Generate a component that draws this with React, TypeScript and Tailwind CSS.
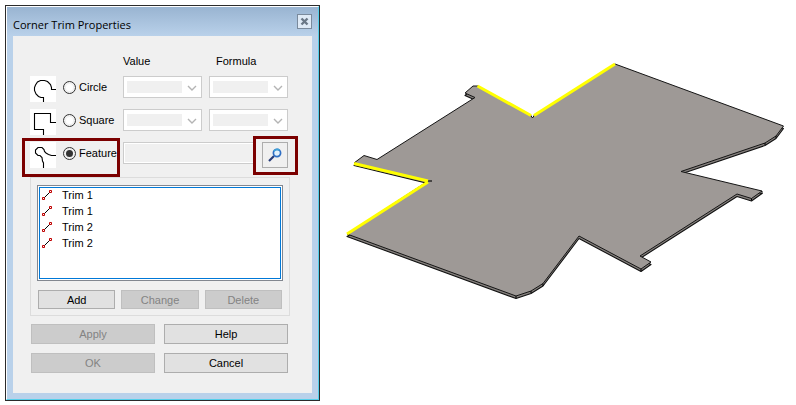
import { useState } from 'react';
import type { ReactNode } from 'react';

type Shape = 'circle' | 'square' | 'feature';

interface TrimItem {
  id: number;
  name: string;
}

const trims: TrimItem[] = [
  { id: 1, name: 'Trim 1' },
  { id: 2, name: 'Trim 1' },
  { id: 3, name: 'Trim 2' },
  { id: 4, name: 'Trim 2' },
];

const shapePaths: Record<Shape, string> = {
  circle: 'M26 13.5H21.5V11.5L20.5 8.5L17.5 5.5L14.5 4.5H10.5L7.5 6L5.5 9L4.5 11.5V14.5L6 18L8.5 20.5L11 21.5H13.5V26',
  square: 'M26 13.5H20.5V4.5H4.5V20.5H13.5V26',
  feature: 'M26 13.5H21.5L18.5 12.5L16 11L14.5 9.5L14 7.5L12 5.5H8L5.5 8V11L8 13.5H10L12 15.5L12.5 19L13.5 21V26',
};

function ShapeIcon({ shape }: { shape: Shape }) {
  return (
    <svg viewBox="0 0 26 26" className="h-[26px] w-[26px] shrink-0 bg-white" aria-hidden="true">
      <path d={shapePaths[shape]} fill="none" stroke="#000" strokeWidth="1.1" />
    </svg>
  );
}

function ShapeOption({ shape, label, checked, onSelect }: {
  shape: Shape;
  label: string;
  checked: boolean;
  onSelect: (shape: Shape) => void;
}) {
  return (
    <div className="relative flex items-start gap-[7px]">
      <ShapeIcon shape={shape} />
      <label className="flex h-[22px] items-center gap-[3px] whitespace-nowrap">
        <input
          type="radio"
          name="shape"
          value={shape}
          checked={checked}
          onChange={() => onSelect(shape)}
          className="h-[13px] w-[13px] shrink-0 appearance-none rounded-full border border-[#333] bg-white bg-clip-content p-[2px] checked:bg-[#333]"
        />
        {label}
      </label>
      {shape === 'feature' && (
        <div className="pointer-events-none absolute -top-1 -right-1 -bottom-[9px] -left-2 border-3 border-[#7b0000]" />
      )}
    </div>
  );
}

function Combo({ label }: { label: string }) {
  return (
    <div className="relative h-[22px] border border-[#ccc] bg-white">
      <select disabled aria-label={label} className="block h-full w-full appearance-none border-y-4 border-r-[19px] border-l-3 border-white bg-[#f0f0f0]" />
      <svg viewBox="0 0 10 6" className="pointer-events-none absolute top-2 right-1 h-[6px] w-[10px]" aria-hidden="true">
        <path d="M1 1L5 5L9 1" fill="none" stroke="#b4b4b4" strokeWidth="1.4" />
      </svg>
    </div>
  );
}

function DialogButton({ disabled, children }: { disabled?: boolean; children: ReactNode }) {
  return (
    <button
      type="button"
      disabled={disabled}
      className="flex h-full w-full items-center justify-center border border-[#adadad] bg-[#e1e1e1] text-black disabled:border-[#bfbfbf] disabled:bg-[#ccc] disabled:text-[#838383]"
    >
      {children}
    </button>
  );
}

function TrimDialog() {
  const [shape, setShape] = useState<Shape>('feature');

  return (
    <section className="border border-[#2b2b2b] font-['Liberation_Sans',Arial,sans-serif] text-[11px] leading-4 text-black">
      <div className="border border-t-white border-r-[#55cfea] border-b-[#55cfea] border-l-white bg-[#b9d1ea] px-[6px] pb-[6px]">
        <header className="-mx-[6px] flex h-[29px] items-start justify-between bg-linear-to-b from-[#99b4d1] to-[#b9d1ea] px-[6px] pt-[7px]">
          <h1 className="pt-[3px] font-['Open_Sans',sans-serif]">Corner Trim Properties</h1>
          <button type="button" aria-label="Close" className="flex h-[15px] w-[15px] items-center justify-center border border-[#7a8a9c] bg-[#dfeaf6]">
            <svg viewBox="0 0 9 9" className="h-[9px] w-[9px]" aria-hidden="true">
              <path d="M1.5 1.5L7.5 7.5M7.5 1.5L1.5 7.5" stroke="#6b7887" strokeWidth="2.4" />
            </svg>
          </button>
        </header>

        <form className="bg-[#f0f0f0] pt-[17px] pr-6 pb-5 pl-[17px]">
          <div className="grid grid-cols-[86px_1fr_1fr] gap-[7px]">
            <span />
            <span>Value</span>
            <span className="pl-[7px]">Formula</span>

            <ShapeOption shape="circle" label="Circle" checked={shape === 'circle'} onSelect={setShape} />
            <Combo label="Circle value" />
            <Combo label="Circle formula" />

            <ShapeOption shape="square" label="Square" checked={shape === 'square'} onSelect={setShape} />
            <Combo label="Square value" />
            <Combo label="Square formula" />

            <ShapeOption shape="feature" label="Feature" checked={shape === 'feature'} onSelect={setShape} />
            <div className="relative col-span-2 flex items-start gap-[6px]">
              <input type="text" disabled aria-label="Feature name" className="h-[22px] min-w-0 flex-1 border border-[#ccc] px-1 shadow-[inset_0_0_0_1px_#fff]" />
              <button type="button" aria-label="Find feature" className="flex h-[26px] w-[26px] items-center justify-center border border-[#adadad] bg-[#f0f0f0]">
                <svg viewBox="0 0 14 14" className="h-[14px] w-[14px]" aria-hidden="true">
                  <path d="M1 13L6 8" stroke="#263b78" strokeWidth="2.2" />
                  <circle cx="9" cy="5" r="3.6" fill="#e2f1fc" stroke="#2f6fc4" strokeWidth="1.7" />
                  <path d="M6 3.2A3.6 3.6 0 0 1 11.5 2.4" fill="none" stroke="#3fa3d8" strokeWidth="1.7" />
                </svg>
              </button>
              <div className="pointer-events-none absolute -top-[6px] -right-[10px] -bottom-[7px] w-[45px] border-3 border-[#7b0000]" />
            </div>
          </div>

          <div className="mt-[9px] -mr-[2px] border border-[#dcdcdc] px-[6px] pt-[7px] pb-[6px]">
            <div className="border border-[#828790] bg-white p-px">
              <ul className="h-[92px] overflow-hidden border border-[#0078d7]">
                {trims.map((trim) => (
                  <li key={trim.id} className="flex h-4 items-start gap-[10px] pl-[2px] leading-[14px]">
                    <svg viewBox="0 0 10 10" className="mt-[2px] h-[10px] w-[10px]" aria-hidden="true">
                      <path d="M2 8L8 2" stroke="#000" />
                      <path d="M.5 7.5h2v2h-2zM7.5 .5h2v2h-2z" fill="#fff" stroke="#c00000" />
                    </svg>
                    {trim.name}
                  </li>
                ))}
              </ul>
            </div>
            <div className="mt-[9px] grid h-[19px] grid-cols-3 gap-[6px] px-px">
              <DialogButton>Add</DialogButton>
              <DialogButton disabled>Change</DialogButton>
              <DialogButton disabled>Delete</DialogButton>
            </div>
          </div>

          <div className="mt-2 grid auto-rows-[20px] grid-cols-2 gap-[9px] pl-px">
            <DialogButton disabled>Apply</DialogButton>
            <DialogButton>Help</DialogButton>
            <DialogButton disabled>OK</DialogButton>
            <DialogButton>Cancel</DialogButton>
          </div>
        </form>
      </div>
    </section>
  );
}

const face =
  'M347 234L428 181L354 163L364 155.5L377 159.5L475 97.5L465 93L473 86L478 86L532 116.5L615 64L783.5 126L776 136L765 143L681 171.5L762 191L751.5 198.5L737 194L640 256L651 262L641 269L579 236L543 283.5L531 291L516 296Z';

function SheetMetalView() {
  return (
    <svg viewBox="340 0 453 330" className="h-auto w-full" role="img" aria-label="Sheet metal part with corner trims">
      <g strokeLinejoin="round">
        <path d={face} transform="translate(0 2.5)" fill="#85807d" stroke="#111" strokeWidth="1.1" />
        <path d={face} fill="#9e9996" stroke="#151515" />
      </g>
      <path d="M516 296V298M531 291V293M543 283.5V286M641 269V271M751.5 198.5V200.5M762 191V194M765 143V145M776 136V138" stroke="#000" />
      <path d="M426 181H432" stroke="#222" strokeWidth="1.4" />
      <path d="M530.5 115L532.5 118L534.5 115" fill="#fff" stroke="#111" />
      <path d="M347 234L428 182M354 163.5L428 181M477.5 86L531 115.5M534 115.5L615 64" fill="none" stroke="#ff0" strokeWidth="3" />
    </svg>
  );
}

export default function App() {
  return (
    <main className="grid min-h-screen grid-cols-[315fr_473fr] items-start bg-white pt-[5px] pr-[3px] pl-[5px]">
      <TrimDialog />
      <div className="-mt-[5px] pl-5">
        <SheetMetalView />
      </div>
    </main>
  );
}
